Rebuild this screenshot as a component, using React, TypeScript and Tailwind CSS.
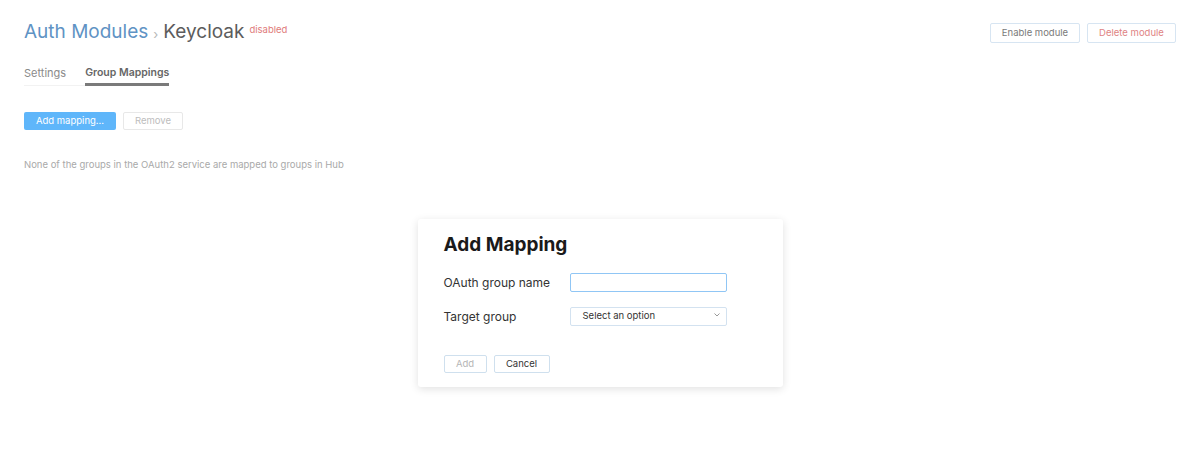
import React from "react";

export default function App() {
  return (
    <div
      className="w-[1200px] h-[454px] bg-white relative overflow-hidden"
      style={{ fontFamily: "Inter, 'Noto Sans', sans-serif" }}
    >
      <div className="px-6 pt-5">
        <div className="flex items-start justify-between">
          <div className="flex items-start">
            <span className="text-[19px] leading-[24px] text-[#5f93c4]">Auth Modules</span>
            <span className="text-[13px] leading-[24px] text-[#b8b8b8] mx-[5px] mt-[2px]">›</span>
            <span className="text-[19px] leading-[24px] text-[#5c5c5c]">Keycloak</span>
            <span className="text-[9.5px] leading-[12px] text-[#e07a7a] ml-[5px] mt-[4px]">disabled</span>
          </div>
          <div className="flex gap-[7px] mt-[3px]">
            <button className="h-[20px] w-[90px] border border-[#d7e5f2] rounded-[2px] text-[9.5px] text-[#7a7a7a] leading-none">
              Enable module
            </button>
            <button className="h-[20px] w-[89px] border border-[#d7e5f2] rounded-[2px] text-[9.5px] text-[#e08484] leading-none">
              Delete module
            </button>
          </div>
        </div>

        <div className="flex mt-[20px] border-b border-[#f2f2f2] w-fit">
          <div className="text-[11px] leading-[14px] text-[#8a8a8a] pb-[5px] whitespace-nowrap">Settings</div>
          <div className="ml-[19px] text-[10.5px] leading-[14px] font-semibold text-[#666] pb-[3px] border-b-[3px] border-[#7a7a7a] mb-[-1px] whitespace-nowrap">
            Group Mappings
          </div>
        </div>

        <div className="flex gap-[7px] mt-[26px]">
          <button className="h-[18px] w-[92px] bg-[#5fb6fa] rounded-[2px] text-[9.5px] text-white leading-none">
            Add mapping...
          </button>
          <button className="h-[18px] w-[60px] border border-[#e8e8e8] rounded-[2px] text-[9.5px] text-[#bdbdbd] leading-none">
            Remove
          </button>
        </div>

        <div className="mt-[29px] text-[9.5px] leading-[12px] text-[#a9a9a9]">
          None of the groups in the OAuth2 service are mapped to groups in Hub
        </div>
      </div>

      <div className="flex justify-center mt-[48px]">
        <div className="w-[365px] h-[168px] bg-white rounded-[3px] shadow-[0_2px_8px_rgba(0,0,0,0.12)] px-[26px] pt-[14px]">
          <div className="text-[19px] leading-[24px] font-bold text-[#1a1a1a]">Add Mapping</div>
          <div className="mt-[16px] flex items-center">
            <div className="w-[126px] text-[12px] text-[#333]">OAuth group name</div>
            <div className="w-[157px] h-[19px] border-[1.5px] border-[#90c6f5] rounded-[2px]" />
          </div>
          <div className="mt-[15px] flex items-center">
            <div className="w-[126px] text-[12px] text-[#333]">Target group</div>
            <div className="w-[157px] h-[19px] border border-[#d3e2f0] rounded-[2px] flex items-center justify-between pl-[12px] pr-[5px]">
              <span className="text-[9.5px] text-[#333]">Select an option</span>
              <svg width="8" height="8" viewBox="0 0 8 8" className="mb-[3px]">
                <path d="M1.5 2.5 L4 5 L6.5 2.5" fill="none" stroke="#999" strokeWidth="1" />
              </svg>
            </div>
          </div>
          <div className="mt-[29px] flex gap-[7px]">
            <button className="h-[18px] w-[43px] border border-[#cfe0ee] rounded-[2px] text-[9.5px] text-[#b5b5b5] leading-none">
              Add
            </button>
            <button className="h-[18px] w-[56px] border border-[#cfe0ee] rounded-[2px] text-[9.5px] text-[#333] leading-none">
              Cancel
            </button>
          </div>
        </div>
      </div>
    </div>
  );
}
